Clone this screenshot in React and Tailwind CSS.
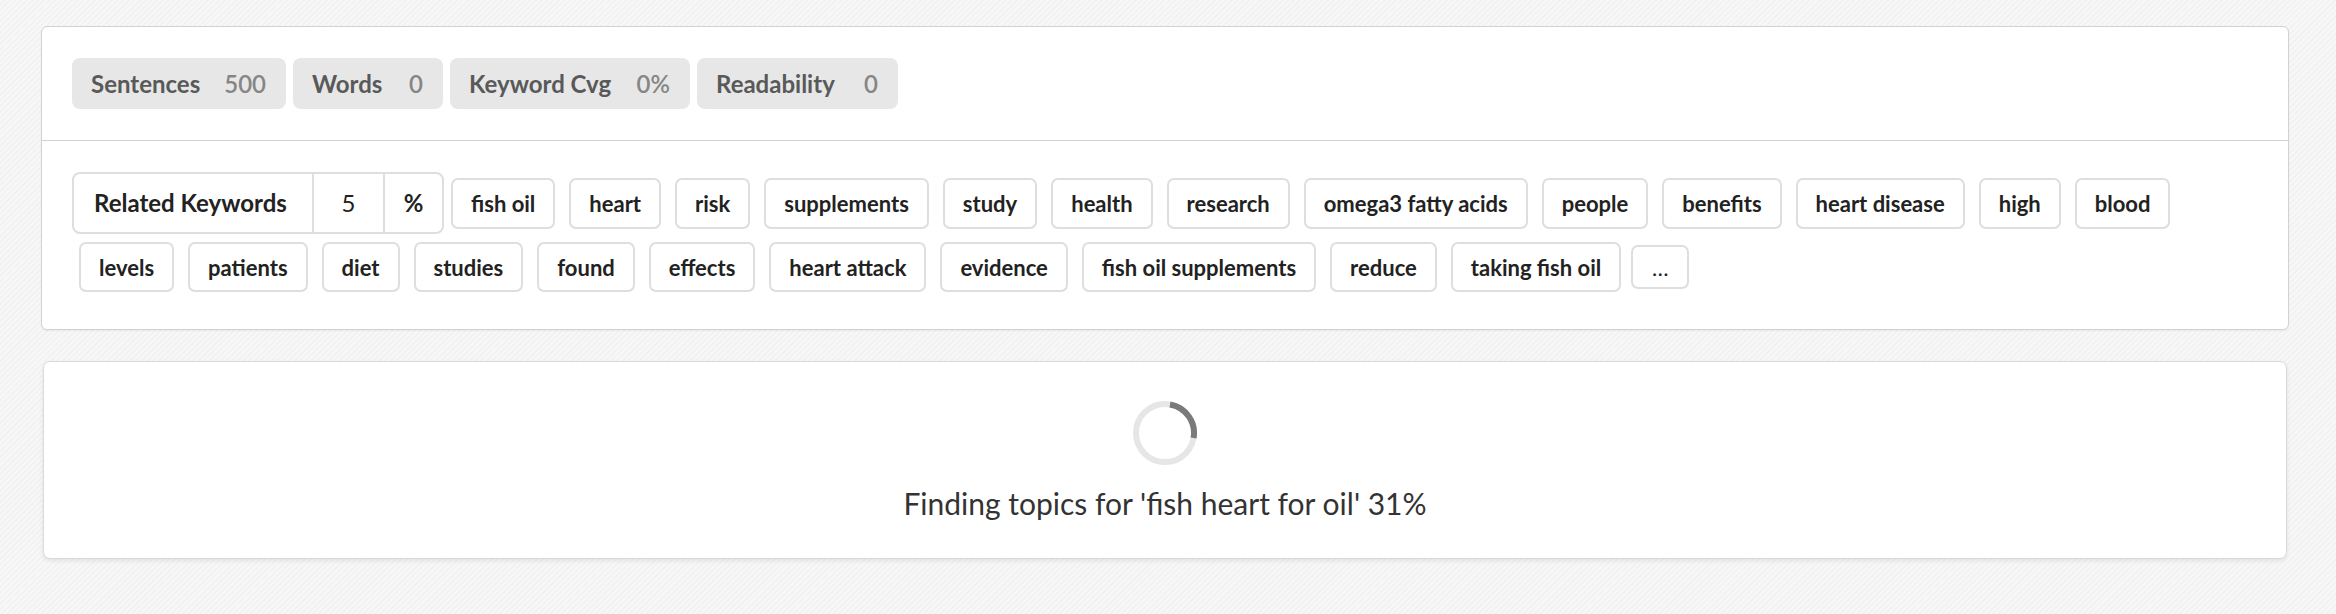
import React from 'react';

const row1 = ['fish oil', 'heart', 'risk', 'supplements', 'study', 'health', 'research', 'omega3 fatty acids', 'people', 'benefits', 'heart disease', 'high', 'blood'];
const row2 = ['levels', 'patients', 'diet', 'studies', 'found', 'effects', 'heart attack', 'evidence', 'fish oil supplements', 'reduce', 'taking fish oil'];

const stats = [
  { label: 'Sentences', value: '500', w: 'w-[214px]' },
  { label: 'Words', value: '0', w: 'w-[150px]' },
  { label: 'Keyword Cvg', value: '0%', w: 'w-[240px]' },
  { label: 'Readability', value: '0', w: 'w-[201px]' },
];

function Tag({ children, h = 'h-[51px]' }) {
  return (
    <span className={`mx-[7px] ${h} px-[18px] flex items-center border-2 border-[#dedede] rounded-[7px] bg-white text-[22px] font-bold text-[#222] whitespace-nowrap`}>
      {children}
    </span>
  );
}

function Spinner() {
  return (
    <svg width="64" height="64" viewBox="0 0 64 64">
      <circle cx="32" cy="32" r="29" fill="none" stroke="#e6e6e6" strokeWidth="6" />
      <path d="M37.04 3.44 A29 29 0 0 1 60.56 37.04" fill="none" stroke="#7a7a7a" strokeWidth="6" />
    </svg>
  );
}

export default function App() {
  return (
    <div className="min-h-[614px] w-full overflow-hidden font-['Lato',sans-serif] bg-[#f4f4f4] bg-[repeating-linear-gradient(135deg,#f7f7f7_0px,#f7f7f7_2px,#f1f1f1_3px,#f1f1f1_4px)] pt-[26px]">
      {/* stats + keywords card */}
      <div className="ml-[41px] w-[2248px] bg-white border border-[#d2d2d2] rounded-[6px] shadow-[0_1px_2px_rgba(0,0,0,0.06)]">
        <div className="px-[30px] pt-[31px] pb-[31px] border-b border-[#d2d2d2] flex gap-[7px]">
          {stats.map((s) => (
            <div key={s.label} className={`${s.w} h-[51px] pl-[19px] pr-[20px] flex items-center justify-between bg-[#e7e7e7] rounded-[8px] text-[24px] font-bold`}>
              <span className="text-[#595959] whitespace-nowrap">{s.label}</span>
              <span className="text-[#858585] font-semibold">{s.value}</span>
            </div>
          ))}
        </div>
        <div className="px-[30px] pt-[31px] pb-[37px] flex flex-col gap-[8px]">
          <div className="flex items-center">
            <div className="h-[62px] flex border-2 border-[#dedede] rounded-[8px] text-[24px] text-[#222]">
              <span className="px-[20px] flex items-center font-bold whitespace-nowrap w-[238px]">Related Keywords</span>
              <span className="w-[71px] flex items-center justify-center border-l-2 border-[#dedede]">5</span>
              <span className="w-[59px] flex items-center justify-center border-l-2 border-[#dedede] font-bold">%</span>
            </div>
            {row1.map((t) => (
              <Tag key={t}>{t}</Tag>
            ))}
          </div>
          <div className="flex items-center">
            {row2.map((t) => (
              <Tag key={t} h="h-[50px]">{t}</Tag>
            ))}
            <span className="ml-[3px] h-[44px] w-[58px] flex items-center justify-center border-2 border-[#dedede] rounded-[7px] text-[22px] text-[#222]">…</span>
          </div>
        </div>
      </div>

      {/* loading card */}
      <div className="mt-[31px] ml-[43px] w-[2244px] bg-white border border-[#dadada] rounded-[7px] shadow-[0_2px_4px_rgba(0,0,0,0.08)] pt-[39px] pb-[37px] flex flex-col items-center">
        <Spinner />
        <p className="mt-[20px] text-[30px] leading-[36px] text-[#333]">Finding topics for 'fish heart for oil' 31%</p>
      </div>
    </div>
  );
}
